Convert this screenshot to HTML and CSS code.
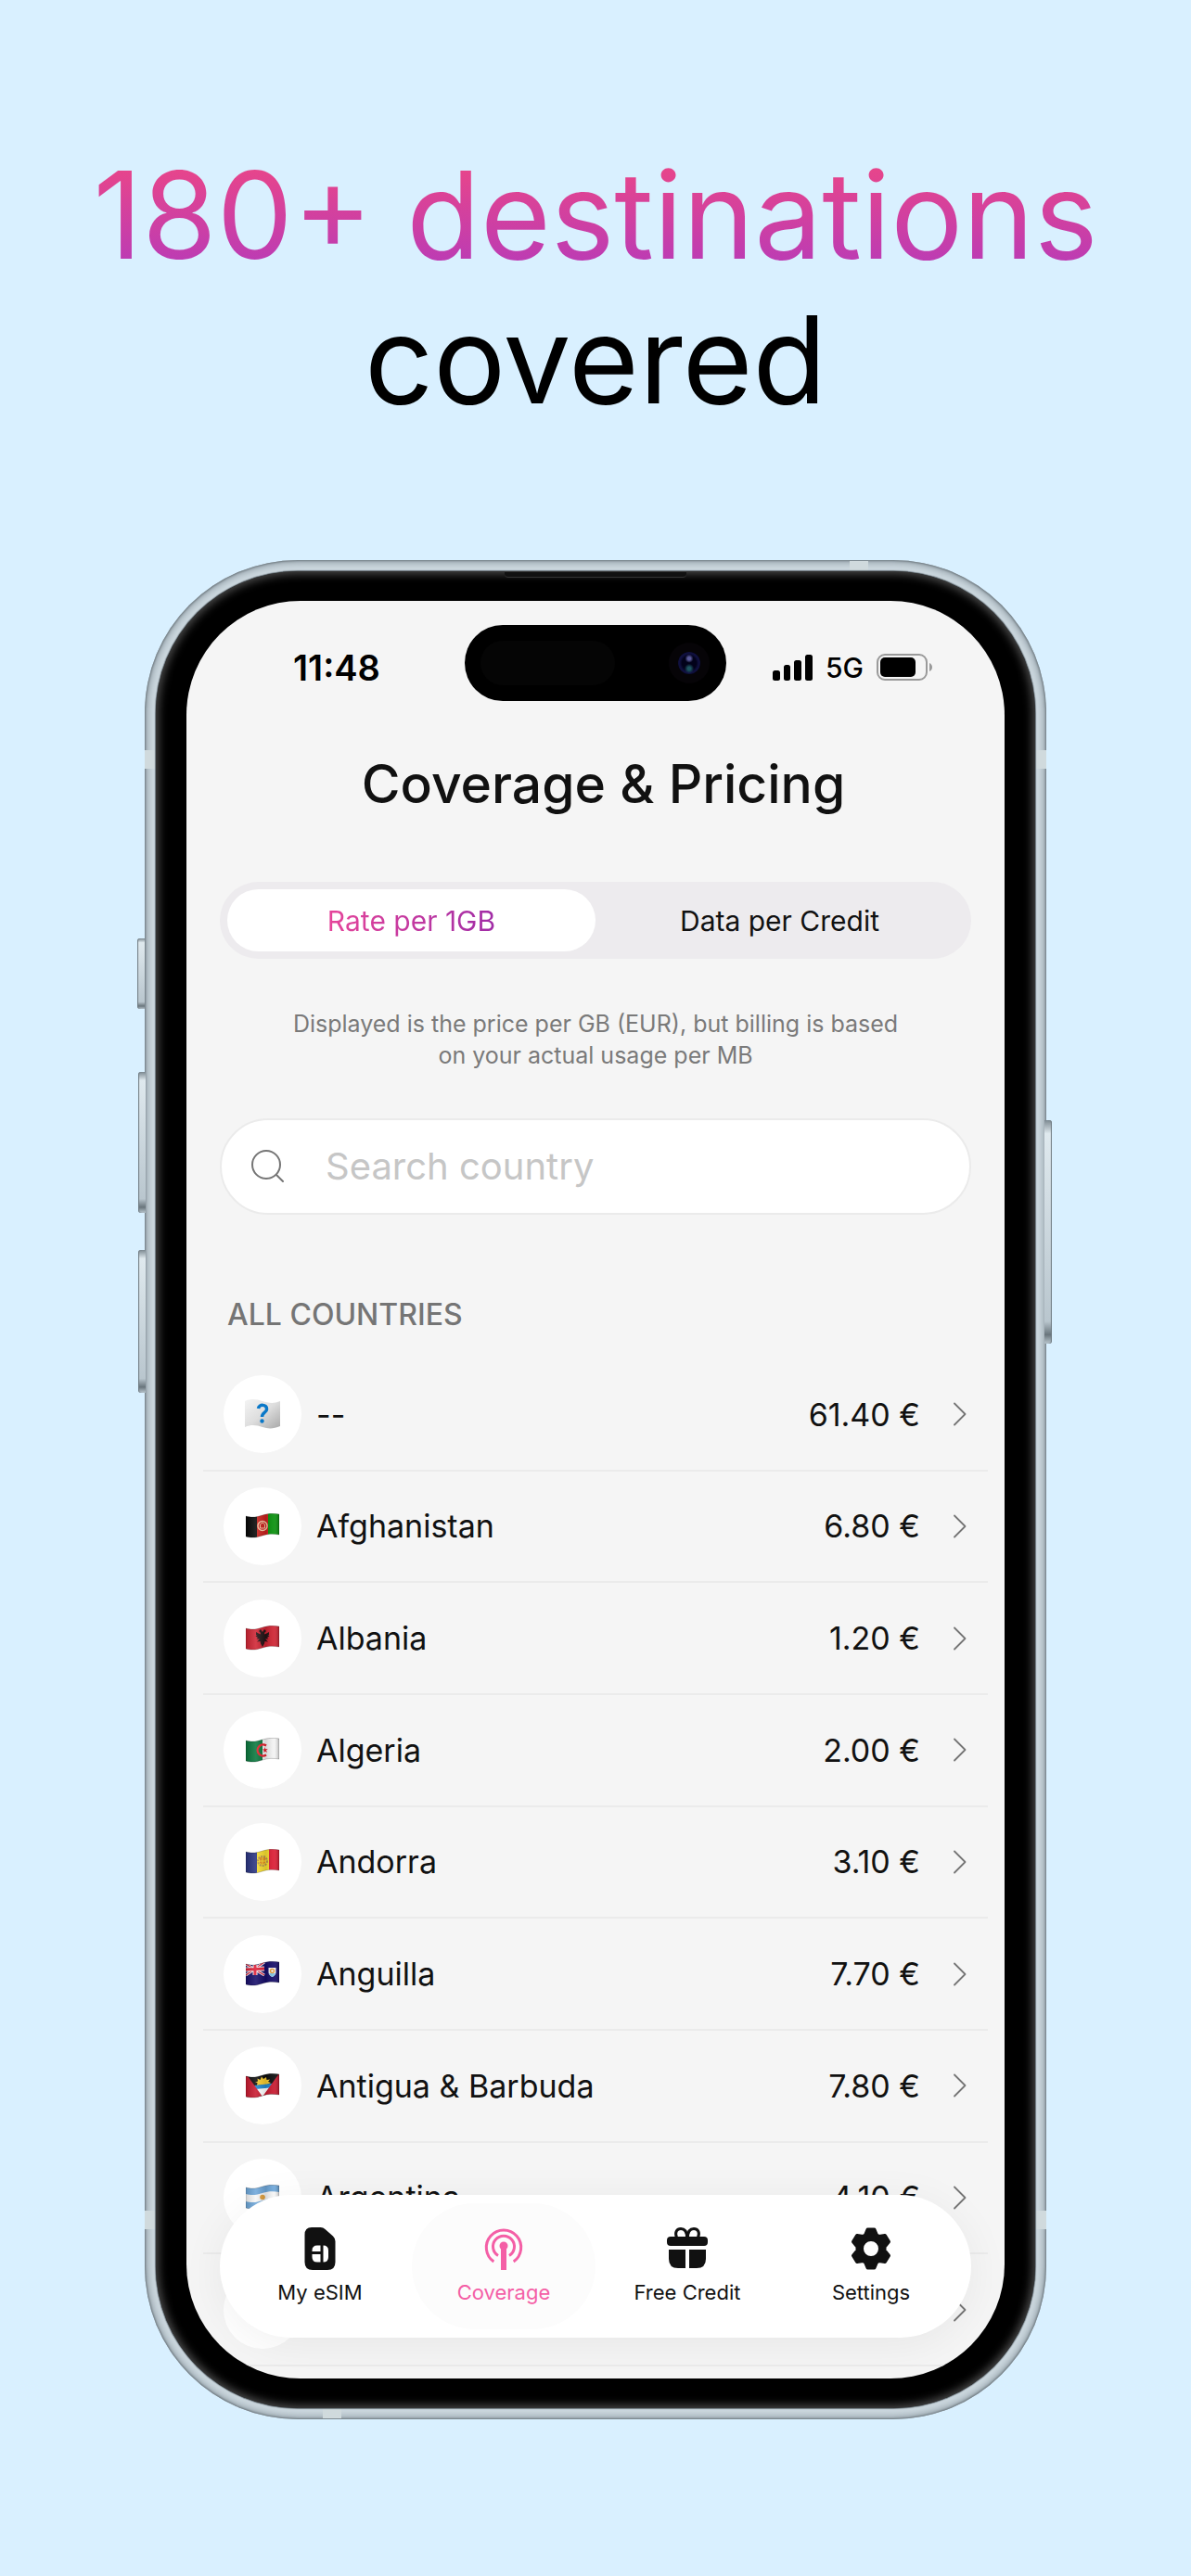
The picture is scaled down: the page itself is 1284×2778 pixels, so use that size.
FILE: index.html
```html
<!DOCTYPE html>
<html lang="en">
<head>
  <meta charset="UTF-8" />
  <title>Coverage &amp; Pricing</title>
  <meta name="viewport" content="width=device-width, initial-scale=1.0" />
  <link rel="stylesheet" href="styles.css">
</head>
<body>
  <!-- Shared icons -->
  <svg class="sprite" aria-hidden="true">
    <defs>
      <symbol id="chevron" viewBox="0 0 16 26">
        <path d="M2 1.5L13.5 13L2 24.5" fill="none" stroke="#757575" stroke-width="1.8" stroke-linecap="round" stroke-linejoin="round" />
      </symbol>
      <linearGradient id="shade" x1="0" x2="1" y1="0" y2="0">
        <stop offset="0" stop-color="#000" stop-opacity="0.15" />
        <stop offset="0.3" stop-color="#fff" stop-opacity="0.12" />
        <stop offset="0.6" stop-color="#000" stop-opacity="0.12" />
        <stop offset="0.85" stop-color="#fff" stop-opacity="0.08" />
        <stop offset="1" stop-color="#000" stop-opacity="0.25" />
      </linearGradient>
      <linearGradient id="cloth" x1="0" x2="1" y1="0" y2="1">
        <stop offset="0" stop-color="#f4f4f4" />
        <stop offset="0.5" stop-color="#dedede" />
        <stop offset="1" stop-color="#a9a9a9" />
      </linearGradient>
      <clipPath id="wave">
        <path d="M0 3C7 5 12 4 18 2S30 0 36 1V23C30 22 24 22 18 24S7 27 0 25Z" />
      </clipPath>
      <path id="wave-shade" d="M0 3C7 5 12 4 18 2S30 0 36 1V23C30 22 24 22 18 24S7 27 0 25Z" fill="url(#shade)" stroke="#000" stroke-opacity="0.2" />
    </defs>
  </svg>

  <h1 class="headline"><span class="headline-accent">180+ destinations</span><br>covered</h1>

  <main class="phone">
    <span class="side-button action"></span>
    <span class="side-button volume-up"></span>
    <span class="side-button volume-down"></span>
    <span class="side-button power"></span>
    <span class="band band-top"></span>
    <span class="band band-bottom"></span>
    <span class="band band-side upper"></span>
    <span class="band band-side lower"></span>
    <div class="bezel">
      <span class="speaker"></span>
      <div class="screen">
        <header class="status-bar">
          <time class="clock">11:48</time>
          <div class="island"><span class="sensor"></span><span class="camera"></span></div>
          <div class="status-icons">
            <svg width="43" height="28" viewBox="0 0 43 28" aria-hidden="true">
              <rect x="0" y="17" width="8" height="11" rx="2.5" />
              <rect x="12" y="11" width="7" height="17" rx="2.5" />
              <rect x="23" y="6" width="8" height="22" rx="2.5" />
              <rect x="35" y="0" width="8" height="28" rx="2.5" />
            </svg>
            <span class="network">5G</span>
            <svg width="60" height="30" viewBox="0 0 60 30" aria-hidden="true">
              <rect x="1" y="1" width="53" height="27" rx="8" fill="none" stroke="#9a9a9a" stroke-width="2" />
              <rect x="4" y="4" width="38" height="21" rx="5" />
              <path d="M57 10Q60 11.5 60 14.5T57 19Z" fill="#9a9a9a" />
            </svg>
          </div>
        </header>

        <h2 class="title">Coverage &amp; Pricing</h2>

        <div class="segments">
          <button type="button" class="segment selected"><span>Rate per 1GB</span></button>
          <button type="button" class="segment"><span>Data per Credit</span></button>
        </div>

        <p class="note">Displayed is the price per GB (EUR), but billing is based on your actual usage per MB</p>

        <label class="search">
          <svg width="36" height="36" viewBox="0 0 36 36" fill="none" stroke="#757575" stroke-width="2" stroke-linecap="round" aria-hidden="true">
            <circle cx="16" cy="16" r="15" />
            <path d="M27 27L34 34" />
          </svg>
          <input type="search" placeholder="Search country" aria-label="Search country" />
        </label>

        <h3 class="list-title">ALL COUNTRIES</h3>

        <ul class="countries">
          <li class="country">
            <span class="flag">
              <svg width="38" height="32" viewBox="0 0 38 32" aria-hidden="true">
                <path d="M0 2C7-1 13 0 19 2S31 5 38 2V29C31 32 25 32 19 30S7 27 0 30Z" fill="url(#cloth)" />
                <path d="M14.5 10C15 5 24 5 23.5 11C23.5 14.5 18.5 14 18.5 19" fill="none" stroke="#0a78c8" stroke-width="3.5" />
                <circle cx="18.5" cy="23.5" r="2.2" fill="#0a78c8" />
              </svg>
            </span>
            <span class="name">--</span><span class="price">61.40 €</span>
            <svg class="chevron"><use href="#chevron" /></svg>
          </li>
          <li class="country">
            <span class="flag">
              <svg width="36" height="27" viewBox="0 0 36 27" aria-hidden="true">
                <g clip-path="url(#wave)">
                  <path fill="#050505" d="M0 0H12V27H0Z" />
                  <path fill="#c8201c" d="M12 0H24V27H12Z" />
                  <path fill="#08910c" d="M24 0H36V27H24Z" />
                  <circle cx="18" cy="13.5" r="5" fill="none" stroke="#f3c5a0" stroke-width="1.4" />
                  <path d="M15.5 16V12L18 10L20.5 12V16Z" fill="none" stroke="#f3c5a0" />
                </g>
                <use href="#wave-shade" />
              </svg>
            </span>
            <span class="name">Afghanistan</span><span class="price">6.80 €</span>
            <svg class="chevron"><use href="#chevron" /></svg>
          </li>
          <li class="country">
            <span class="flag">
              <svg width="36" height="27" viewBox="0 0 36 27" aria-hidden="true">
                <g clip-path="url(#wave)">
                  <path fill="#cf2332" d="M0 0H36V27H0Z" />
                  <path fill="#231214" d="M18 7L16 4L14 6L16 8L15.5 9.5L11 7V10L12 10.5L10.5 11.5L13 13L11.5 14.5L15 14.5L12 17.5L15.5 17L16 19.5L18 23L20 19.5L20.5 17L24 17.5L21 14.5L24.5 14.5L23 13L25.5 11.5L24 10.5L25 10V7L20.5 9.5L20 8L22 6L20 4Z" />
                </g>
                <use href="#wave-shade" />
              </svg>
            </span>
            <span class="name">Albania</span><span class="price">1.20 €</span>
            <svg class="chevron"><use href="#chevron" /></svg>
          </li>
          <li class="country">
            <span class="flag">
              <svg width="36" height="27" viewBox="0 0 36 27" aria-hidden="true">
                <g clip-path="url(#wave)">
                  <path fill="#08763c" d="M0 0H18V27H0Z" />
                  <path fill="#f4f4f4" d="M18 0H36V27H18Z" />
                  <path d="M22 8.5A6 6 0 1 0 22 18.5" fill="none" stroke="#e5202c" stroke-width="2.4" />
                  <path d="M20.5 10L21.3 12.2L23.8 12L22 13.6L23 16L21 14.8L19 16L19.6 14L18 12.5L20 12.2Z" fill="#e5202c" />
                </g>
                <use href="#wave-shade" />
              </svg>
            </span>
            <span class="name">Algeria</span><span class="price">2.00 €</span>
            <svg class="chevron"><use href="#chevron" /></svg>
          </li>
          <li class="country">
            <span class="flag">
              <svg width="36" height="27" viewBox="0 0 36 27" aria-hidden="true">
                <g clip-path="url(#wave)">
                  <path fill="#28327f" d="M0 0H12V27H0Z" />
                  <path fill="#f6dc2f" d="M12 0H25V27H12Z" />
                  <path fill="#dc1c34" d="M25 0H36V27H25Z" />
                  <circle cx="18" cy="13" r="5" fill="none" stroke="#b5934a" stroke-width="2" stroke-dasharray="2 1" />
                  <path fill="#e08b22" d="M15 9H21V15L18 17L15 15Z" />
                  <path stroke="#f6dc2f" d="M18 9V17M15 13H21" />
                </g>
                <use href="#wave-shade" />
              </svg>
            </span>
            <span class="name">Andorra</span><span class="price">3.10 €</span>
            <svg class="chevron"><use href="#chevron" /></svg>
          </li>
          <li class="country">
            <span class="flag">
              <svg width="36" height="27" viewBox="0 0 36 27" aria-hidden="true">
                <g clip-path="url(#wave)">
                  <path fill="#150c68" d="M0 0H36V27H0Z" />
                  <path stroke="#f2f2f6" stroke-width="3" d="M0 3L20 15M20 1L0 15" />
                  <path stroke="#e01e36" stroke-width="1.2" d="M0 3L20 15M20 1L0 15" />
                  <path stroke="#f2f2f6" stroke-width="5" d="M10 0V15M0 9L20 8" />
                  <path stroke="#e01e36" stroke-width="3" d="M10 0V15M0 9L20 8" />
                  <path fill="#f4f4f4" d="M24.5 7H32.5V12Q32.5 15 28.5 17Q24.5 15 24.5 12Z" />
                  <path fill="#7cc3e6" d="M25 13H32Q31 16 28.5 17Q26 16 25 13Z" />
                  <circle cx="28.5" cy="10.5" r="2" fill="none" stroke="#e59a36" stroke-width="1.5" />
                </g>
                <use href="#wave-shade" />
              </svg>
            </span>
            <span class="name">Anguilla</span><span class="price">7.70 €</span>
            <svg class="chevron"><use href="#chevron" /></svg>
          </li>
          <li class="country">
            <span class="flag">
              <svg width="36" height="27" viewBox="0 0 36 27" aria-hidden="true">
                <g clip-path="url(#wave)">
                  <path fill="#0b0b0b" d="M0 0H36V27H0Z" />
                  <path fill="#f6c92c" d="M12 13L12.5 10L10 9.5L13 8.5L12.5 5.5L15.5 7L17 3.5L19 6L22 4L22.5 7L26 6.5L24 9L27 10L23 12Z" />
                  <path fill="#1e86cf" d="M0 14L36 10V17L0 19Z" />
                  <path fill="#fff" d="M0 18L36 14.5V27H0Z" />
                  <path fill="#c8182e" d="M0 0L18 25V27H0ZM36 0L18 25V27H36Z" />
                </g>
                <use href="#wave-shade" />
              </svg>
            </span>
            <span class="name">Antigua &amp; Barbuda</span><span class="price">7.80 €</span>
            <svg class="chevron"><use href="#chevron" /></svg>
          </li>
          <li class="country">
            <span class="flag">
              <svg width="36" height="27" viewBox="0 0 36 27" aria-hidden="true">
                <g clip-path="url(#wave)">
                  <path fill="#6fa9dc" d="M0 0H36V27H0Z" />
                  <path fill="#fafafa" d="M0 10C7 12 12 11 18 9S30 7 36 8V16C30 15 24 15 18 17S7 20 0 18Z" />
                  <circle cx="18" cy="13.5" r="2.8" fill="#e2a03c" />
                </g>
                <use href="#wave-shade" />
              </svg>
            </span>
            <span class="name">Argentina</span><span class="price">4.10 €</span>
            <svg class="chevron"><use href="#chevron" /></svg>
          </li>
          <li class="country">
            <span class="flag"></span>
            <span class="name"></span><span class="price"></span>
            <svg class="chevron"><use href="#chevron" /></svg>
          </li>
        </ul>

        <nav class="tab-bar">
          <a class="tab" href="#esim">
            <svg width="44" height="46" viewBox="0 0 44 46" aria-hidden="true">
              <path fill="#111" fill-rule="evenodd" d="M13 0H22.5Q25.5 0 27.5 2L36 9.5Q38.5 12 38.5 15V37.5Q38.5 46 30 46H14Q5.5 46 5.5 37.5V8Q5.5 0 13 0ZM19 19.5Q13.5 19.5 13.5 25V26H22.5V19.5ZM25.5 19.5V37.5Q31 37.5 31 32V25Q31 19.5 25.5 19.5ZM13.5 29V32Q13.5 37.5 19 37.5H22.5V29Z" />
            </svg>
            My eSIM
          </a>
          <a class="tab current" href="#coverage">
            <svg width="44" height="46" viewBox="0 0 44 46" fill="none" stroke="#f45fa6" stroke-width="3" aria-hidden="true">
              <path d="M11.3 37A18.7 18.7 0 1 1 32.7 37" />
              <path d="M16 30.5A11.5 11.5 0 1 1 28 30.5" />
              <circle cx="22" cy="20" r="4.5" fill="#f45fa6" stroke="none" />
              <path d="M22 20V46" stroke-width="6" />
            </svg>
            Coverage
          </a>
          <a class="tab" href="#credit">
            <svg width="44" height="46" viewBox="0 0 44 46" fill="#111" aria-hidden="true">
              <rect x="0" y="10" width="44" height="10" rx="4" />
              <path d="M2 24H20V44H12Q2 44 2 34ZM24 24H42V34Q42 44 32 44H24Z" />
              <path d="M10.5 11C8 5 11 1.5 15 1.5C20 1.5 21.5 6 21.5 11M33.5 11C36 5 33 1.5 29 1.5C24 1.5 22.5 6 22.5 11" fill="none" stroke="#111" stroke-width="3" />
            </svg>
            Free Credit
          </a>
          <a class="tab" href="#settings">
            <svg width="44" height="46" viewBox="0 0 44 46" aria-hidden="true">
              <path fill="#111" stroke="#111" stroke-width="4" stroke-linejoin="round" fill-rule="evenodd" d="M18.5 2.5H25.5L28 8.5L30.5 10L37 9L41 15.5L36.5 21V25L41 30.5L37 37L30.5 36L28 37.5L25.5 43.5H18.5L16 37.5L13.5 36L7 37L3 30.5L7.5 25V21L3 15.5L7 9L13.5 10L16 8.5ZM22 13A10 10 0 1 0 22 33A10 10 0 1 0 22 13Z" />
            </svg>
            Settings
          </a>
        </nav>
      </div>
    </div>
  </main>
</body>
</html>
```

FILE: styles.css
```css
* {
  box-sizing: border-box;
}

body {
  margin: 0;
  min-height: 100vh;
  padding: 154px 156px 0;
  background-color: #d9f0ff;
  color: #111;
  font-family: Inter, "Liberation Sans", sans-serif;
}

h1, h2, h3, p, ul {
  margin: 0;
  padding: 0;
  font-weight: 400;
}

.sprite {
  position: absolute;
  width: 0;
  height: 0;
}

.headline {
  margin: 0 -100px 138px;
  color: #000;
  font-size: 130px;
  line-height: 156px;
  text-align: center;
  white-space: nowrap;
}

.headline-accent {
  background: linear-gradient(#e6458c 20%, #be3cb2 80%);
  -webkit-background-clip: text;
  background-clip: text;
  color: transparent;
}

/* Phone body */
.phone {
  position: relative;
  padding: 12px;
  border-radius: 165px;
  background: #ccd8df;
  box-shadow: inset 0 0 2px 1px #727d84, inset 0 0 9px 2px #87949c;
}

.bezel {
  position: relative;
  padding: 32px 33px;
  border-radius: 153px;
  background: #000;
  box-shadow: inset 0 0 10px 3px #4a4a4a, 0 0 1px 1px #6b767d;
}

.side-button {
  position: absolute;
  left: -7px;
  width: 8px;
  border-radius: 3px 0 0 3px;
  background: linear-gradient(#7d8a92, #dfe9ee 6%, #b9c6ce 90%, #69757c 96%, #b9c6ce);
  box-shadow: inset 1px 0 1px #6f7a81;
}

.action {
  top: 408px;
  left: -8px;
  height: 76px;
}

.volume-up {
  top: 552px;
  height: 152px;
}

.volume-down {
  top: 744px;
  height: 154px;
}

.power {
  top: 604px;
  left: auto;
  right: -6px;
  height: 241px;
  border-radius: 0 3px 3px 0;
  box-shadow: inset -1px 0 1px #6f7a81;
}

.band {
  position: absolute;
  background: #d0dadd;
}

.band-top, .band-bottom {
  width: 20px;
  height: 11px;
}

.band-top {
  top: 1px;
  right: 192px;
}

.band-bottom {
  bottom: 1px;
  left: 192px;
}

.band-side {
  left: 0;
  right: 0;
  height: 20px;
}

.upper {
  top: 205px;
}

.lower {
  bottom: 205px;
}

.speaker {
  position: absolute;
  top: 1px;
  left: 50%;
  width: 196px;
  height: 6px;
  margin-left: -98px;
  border-radius: 0 0 4px 4px;
  background: #111;
  border-bottom: 1px solid #333;
}

.screen {
  position: relative;
  aspect-ratio: 882 / 1917;
  padding: 26px 36px 0;
  border-radius: 123px;
  background: #f5f5f5;
  overflow: hidden;
}

/* Status bar */
.status-bar {
  display: grid;
  grid-template-columns: 1fr 282px 1fr;
  align-items: center;
  height: 82px;
  color: #000;
}

.clock {
  padding: 10px 0 0 79px;
  font-size: 38px;
  font-weight: 600;
  line-height: 44px;
}

.island {
  display: flex;
  align-items: center;
  justify-content: space-between;
  height: 82px;
  padding: 0 28px 0 17px;
  border-radius: 41px;
  background: #000;
}

.sensor {
  width: 145px;
  height: 48px;
  border-radius: 24px;
  background: #050505;
}

.camera {
  width: 24px;
  height: 24px;
  border-radius: 50%;
  background: radial-gradient(circle at 50% 30%, #5a5a9a 0 8%, transparent 22%), radial-gradient(circle at 50% 75%, #1d5560 0 8%, transparent 24%), radial-gradient(#02021a 45%, #101040 60%, #0b0b22);
  box-shadow: 0 0 0 10px #060407;
}

.status-icons {
  display: flex;
  align-items: center;
  gap: 14px;
  padding: 10px 0 0 50px;
}

.network {
  font-size: 30px;
  font-weight: 500;
  line-height: 36px;
}

/* Content */
.title {
  padding-left: 17px;
  margin: 53px 0 69px;
  font-size: 57px;
  font-weight: 500;
  line-height: 73px;
  text-align: center;
}

.segments {
  display: grid;
  grid-template-columns: 1fr 1fr;
  height: 83px;
  padding: 8px;
  border-radius: 42px;
  background: #edebee;
}

.segment {
  border: 0;
  border-radius: 34px;
  background: none;
  color: #111;
  font: 400 30px/36px Inter, "Liberation Sans", sans-serif;
}

.selected {
  background: #fff;
}

.selected span {
  background: linear-gradient(90deg, #e6459a, #a02ca6);
  -webkit-background-clip: text;
  background-clip: text;
  color: transparent;
}

.note {
  max-width: 670px;
  margin: 53px auto 51px;
  color: #7a7a7a;
  font-size: 25px;
  line-height: 34px;
  text-align: center;
}

.search {
  display: flex;
  align-items: center;
  gap: 44px;
  height: 104px;
  padding: 0 32px;
  border: 2px solid #ebebeb;
  border-radius: 52px;
  background: #fff;
}

.search input {
  flex: 1;
  min-width: 0;
  padding: 0;
  border: 0;
  outline: 0;
  background: none;
  color: #111;
  font: 400 40px/48px Inter, "Liberation Sans", sans-serif;
}

.search input::placeholder {
  color: #c6c6c6;
}

.list-title {
  margin: 89px 0 30px 8px;
  color: #757575;
  font-size: 32px;
  font-weight: 500;
  line-height: 37px;
}

.countries {
  display: grid;
  grid-template-rows: repeat(9, 1fr);
  height: 1086px;
  margin: 0 -18px;
  list-style: none;
}

.country {
  display: flex;
  align-items: center;
  padding: 0 22px;
  border-bottom: 2px solid #ebebeb;
  font-size: 34px;
  line-height: 41px;
}

.flag {
  display: flex;
  align-items: center;
  justify-content: center;
  width: 84px;
  height: 84px;
  margin-right: 16px;
  border-radius: 50%;
  background: #fff;
}

.name {
  flex: 1;
}

.chevron {
  width: 16px;
  height: 26px;
  margin-left: 35px;
}

/* Bottom tabs */
.tab-bar {
  position: absolute;
  left: 36px;
  right: 36px;
  bottom: 44px;
  display: grid;
  grid-template-columns: repeat(4, 1fr);
  height: 154px;
  padding: 9px;
  border-radius: 77px;
  background: #fff;
  box-shadow: 0 8px 48px rgba(0, 0, 0, 0.06);
}

.tab {
  display: flex;
  flex-direction: column;
  align-items: center;
  gap: 11px;
  padding-top: 26px;
  border-radius: 68px;
  color: #111;
  font-size: 22px;
  line-height: 27px;
  text-decoration: none;
}

.current {
  background: #fcfcfc;
  color: #f45fa6;
}
```
